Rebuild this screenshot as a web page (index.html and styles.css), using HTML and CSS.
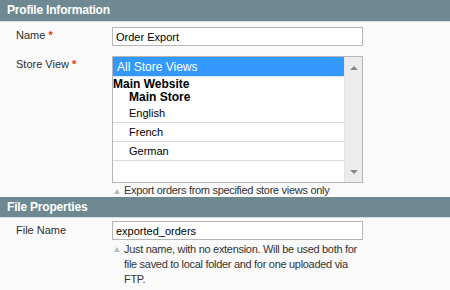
FILE: index.html
```html
<!DOCTYPE html>
<html lang="en">
<head>
<meta charset="UTF-8">
<title>Profile Information</title>
<link rel="stylesheet" href="styles.css">
</head>
<body>

<div class="secao">Profile Information</div>

<div class="linha linha-nome">
  <label class="rotulo">Name <span class="req">*</span></label>
  <div class="valor">
    <input type="text" class="campo" value="Order Export">
  </div>
</div>

<div class="linha linha-loja">
  <label class="rotulo">Store View <span class="req">*</span></label>
  <div class="valor">
    <div class="lista">
      <div class="opcoes">
        <div class="opcao selecionada">All Store Views</div>
        <div class="grupo">Main Website</div>
        <div class="grupo sub">Main Store</div>
        <div class="opcao sub">English</div>
        <div class="opcao sub linha-b">French</div>
        <div class="opcao sub linha-b">German</div>
        <div class="opcao vazia"></div>
      </div>
      <div class="rolagem">
        <span class="seta cima"></span>
        <span class="seta baixo"></span>
      </div>
    </div>
    <p class="nota nota-loja"><span class="tri"></span>Export orders from specified store views only</p>
  </div>
</div>

<div class="secao">File Properties</div>

<div class="linha linha-arquivo">
  <label class="rotulo">File Name</label>
  <div class="valor">
    <input type="text" class="campo" value="exported_orders">
    <p class="nota"><span class="tri"></span>Just name, with no extension. Will be used both for file saved to local folder and for one uploaded via FTP.</p>
  </div>
</div>

</body>
</html>
```

FILE: styles.css
```css
body {
  margin: 0;
  background: #fafafa;
  font-family: "Liberation Sans", Arial, sans-serif;
  font-size: 11px;
  color: #2f2f2f;
}

.secao {
  background: #6f8992;
  color: #fff;
  font-weight: bold;
  font-size: 12px;
  letter-spacing: -0.2px;
  height: 20px;
  line-height: 20px;
  padding-left: 7px;
  border-bottom: 1px solid #d6dde0;
}
.secao:first-child {
  height: 21px;
  line-height: 21px;
}

.linha {
  display: flex;
}
.rotulo {
  width: 96px;
  padding-left: 16px;
}
.req { color: #eb340a; font-weight: bold; }

.valor {
  width: 251px;
}

.linha-nome { margin-top: 5px; }
.linha-nome .rotulo { padding-top: 2px; }

.campo {
  box-sizing: border-box;
  width: 251px;
  height: 19px;
  margin: 0;
  padding: 0 0 0 3px;
  border: 1px solid #b6b6b6;
  background: #fff;
  font-family: "Liberation Sans", Arial, sans-serif;
  font-size: 11px;
  color: #000;
}

.linha-loja { margin-top: 10px; }
.linha-loja .rotulo { padding-top: 2px; }

.lista {
  display: flex;
  height: 125px;
  border: 1px solid #b6b6b6;
  background: #fff;
}
.opcoes {
  flex: 1;
  color: #000;
}
.opcao {
  height: 18px;
  line-height: 18px;
  padding-left: 16px;
}
.selecionada {
  height: 19px;
  line-height: 20px;
  padding-left: 4px;
  background: #3399ff;
  color: #fff;
  border-bottom: 1px solid #d6e6f6;
  font-size: 12px;
}
.grupo {
  font-weight: bold;
  font-size: 12px;
  height: 13px;
  line-height: 14px;
}
.grupo.sub {
  height: 14px;
  line-height: 14px;
  padding-left: 16px;
}
.opcao.sub { border-bottom: 1px solid #dadada; }
.opcao.vazia { border: none; }

.rolagem {
  width: 17px;
  background: #ececec;
  border-left: 1px solid #e2e2e2;
  display: flex;
  flex-direction: column;
  justify-content: space-between;
  align-items: center;
  padding: 9px 0 8px;
}
.seta {
  width: 0;
  height: 0;
  border-left: 4px solid transparent;
  border-right: 4px solid transparent;
}
.cima { border-bottom: 4px solid #8a8a8a; }
.baixo { border-top: 4px solid #8a8a8a; }

.nota {
  margin: 0;
  padding-left: 12px;
  position: relative;
  font-size: 11px;
  letter-spacing: -0.3px;
  line-height: 15px;
  color: #333;
}
.nota-loja { margin-top: 1px; line-height: 13px; }
.tri {
  position: absolute;
  left: 2px;
  top: 5px;
  width: 0;
  height: 0;
  border-left: 3px solid transparent;
  border-right: 3px solid transparent;
  border-bottom: 5px solid #b3bcc2;
}

.linha-arquivo { margin-top: 3px; }
.linha-arquivo .rotulo { padding-top: 3px; }
.linha-arquivo .nota { margin-top: 2px; }
```
